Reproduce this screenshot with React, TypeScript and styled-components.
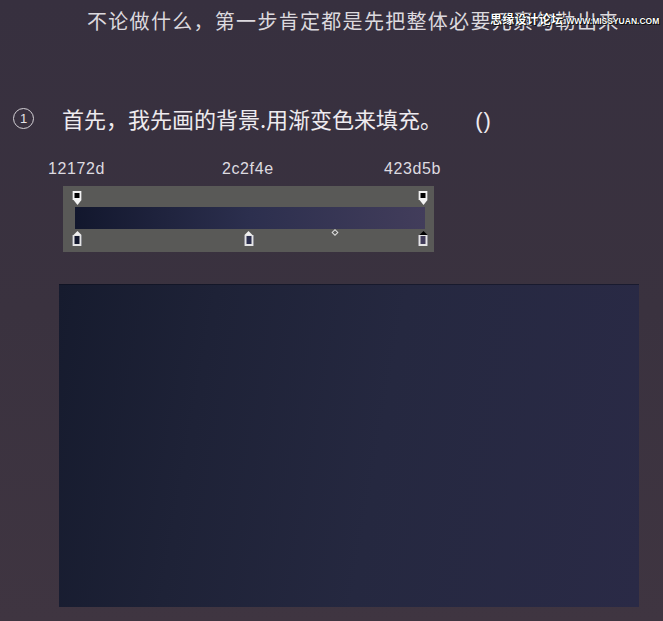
import React from "react"
import styled, { createGlobalStyle } from "styled-components"

const GlobalStyle = createGlobalStyle`
    html, body {
        margin: 0;
        padding: 0;
        background: #38313f;
    }
`

const CJK = `"Noto Sans CJK SC", "Noto Sans", sans-serif`

const Page = styled.div`
    position: relative;
    width: 663px;
    height: 621px;
    overflow: hidden;
    background: linear-gradient(180deg, #37303f 0%, #3a323f 50%, #3f3541 100%);
    font-family: ${CJK};
    display: flex;
    flex-direction: column;
`

const Intro = styled.div`
    margin: 9px 0 0 87px;
    font-size: 20px;
    line-height: 24px;
    letter-spacing: 1.3px;
    color: #dcd9de;
    white-space: nowrap;
`

// site watermark stamped over the top line
const Watermark = styled.div`
    position: absolute;
    left: 490px;
    top: 10px;
    display: flex;
    align-items: baseline;
    gap: 3px;
    color: #fff;
    font-weight: bold;
    text-shadow: 0 0 1px #000, 0 0 1px #000, 1px 1px 0 #111;
    white-space: nowrap;

    .cn {
        font-size: 12px;
        letter-spacing: 0.2px;
    }
    .en {
        font-family: "Liberation Sans", sans-serif;
        font-size: 8.5px;
        letter-spacing: 0;
    }
`

const Step = styled.div`
    display: flex;
    align-items: center;
    margin: 70px 0 0 13px;
    height: 30px;
`

const StepNumber = styled.span`
    width: 21px;
    height: 21px;
    box-sizing: border-box;
    border: 1.2px solid #d4d1d6;
    border-radius: 50%;
    display: flex;
    align-items: center;
    justify-content: center;
    font-family: "Liberation Sans", sans-serif;
    font-size: 13px;
    color: #e6e3e8;
`

const StepText = styled.span`
    margin-left: 28px;
    font-size: 22px;
    color: #eeebef;
    white-space: nowrap;
`

const Parens = styled.span`
    margin-left: 33px;
    font-family: "Liberation Sans", sans-serif;
    font-weight: 300;
    letter-spacing: 1px;
`

const HexRow = styled.div`
    display: grid;
    grid-template-columns: 174px 162px auto;
    margin: 27px 0 0 48px;
    height: 18px;
`

const HexLabel = styled.span`
    font-family: "Liberation Sans", Arial, sans-serif;
    font-size: 16px;
    line-height: 18px;
    letter-spacing: 0.6px;
    color: #dedbe0;
`

const Panel = styled.div`
    margin: 8px 0 0 63px;
    width: 371px;
    height: 66px;
    box-sizing: border-box;
    padding: 0 9px 0 12px;
    background: #595957;
    display: flex;
    flex-direction: column;
`

const StopTrack = styled.div<{ $h: number }>`
    position: relative;
    height: ${(p) => p.$h}px;
    margin: 0 2px;
`

const Bar = styled.div`
    height: 22px;
    background: linear-gradient(90deg, #12172d 0%, #2c2f4e 50%, #423d5b 100%);
`

const OpacityStop = styled.div<{ $pos: number }>`
    position: absolute;
    top: 5px;
    left: ${(p) => p.$pos}%;
    transform: translateX(-50%);
    display: flex;
    flex-direction: column;
    align-items: center;

    .box {
        width: 9px;
        height: 9px;
        box-sizing: border-box;
        border: 2px solid #f2f2f2;
        background: #000;
    }
    .tip {
        width: 0;
        height: 0;
        border-left: 4px solid transparent;
        border-right: 4px solid transparent;
        border-top: 5px solid #f2f2f2;
    }
`

const ColorStop = styled.div<{ $pos: number; $color: string; $active?: boolean }>`
    position: absolute;
    top: 2px;
    left: ${(p) => p.$pos}%;
    transform: translateX(-50%);
    display: flex;
    flex-direction: column;
    align-items: center;

    .tip {
        width: 0;
        height: 0;
        border-left: 4px solid transparent;
        border-right: 4px solid transparent;
        border-bottom: 4px solid ${(p) => (p.$active ? "#000" : "#eeeeee")};
    }
    .box {
        width: 9px;
        height: 11px;
        box-sizing: border-box;
        border: 2px solid #e4e4e4;
        border-top-width: 1px;
        background: ${(p) => p.$color};
    }
`

const Midpoint = styled.div<{ $pos: number }>`
    position: absolute;
    top: 1px;
    left: ${(p) => p.$pos}%;
    width: 5px;
    height: 5px;
    box-sizing: border-box;
    border: 1px solid #ddd;
    transform: translateX(-50%) rotate(45deg);
`

const Canvas = styled.div`
    margin: 32px 0 0 59px;
    width: 580px;
    height: 323px;
    background: linear-gradient(100deg, #161b2e 0%, #1e2237 25%, #252840 55%, #2a2a46 100%);
    box-shadow: inset 0 1px 0 rgba(10, 12, 25, 0.5);
`

const stops = [
    { hex: "12172d", pos: 0 },
    { hex: "2c2f4e", pos: 49.6 },
    { hex: "423d5b", pos: 100, active: true },
]

export default function App(): JSX.Element {
    return (
        <>
            <GlobalStyle />
            <Page>
                <Intro>不论做什么，第一步肯定都是先把整体必要元素勾勒出来</Intro>
                <Watermark>
                    <span className="cn">思缘设计论坛</span>
                    <span className="en">WWW.MISSYUAN.COM</span>
                </Watermark>
                <Step>
                    <StepNumber>1</StepNumber>
                    <StepText>
                        首先，我先画的背景.用渐变色来填充。
                        <Parens>()</Parens>
                    </StepText>
                </Step>
                <HexRow>
                    {stops.map((s) => (
                        <HexLabel key={s.hex}>{s.hex}</HexLabel>
                    ))}
                </HexRow>
                <Panel>
                    <StopTrack $h={21}>
                        <OpacityStop $pos={0}>
                            <div className="box" />
                            <div className="tip" />
                        </OpacityStop>
                        <OpacityStop $pos={100}>
                            <div className="box" />
                            <div className="tip" />
                        </OpacityStop>
                    </StopTrack>
                    <Bar />
                    <StopTrack $h={23}>
                        {stops.map((s) => (
                            <ColorStop key={s.hex} $pos={s.pos} $color={"#" + s.hex} $active={s.active}>
                                <div className="tip" />
                                <div className="box" />
                            </ColorStop>
                        ))}
                        <Midpoint $pos={74.6} />
                    </StopTrack>
                </Panel>
                <Canvas />
            </Page>
        </>
    )
}
